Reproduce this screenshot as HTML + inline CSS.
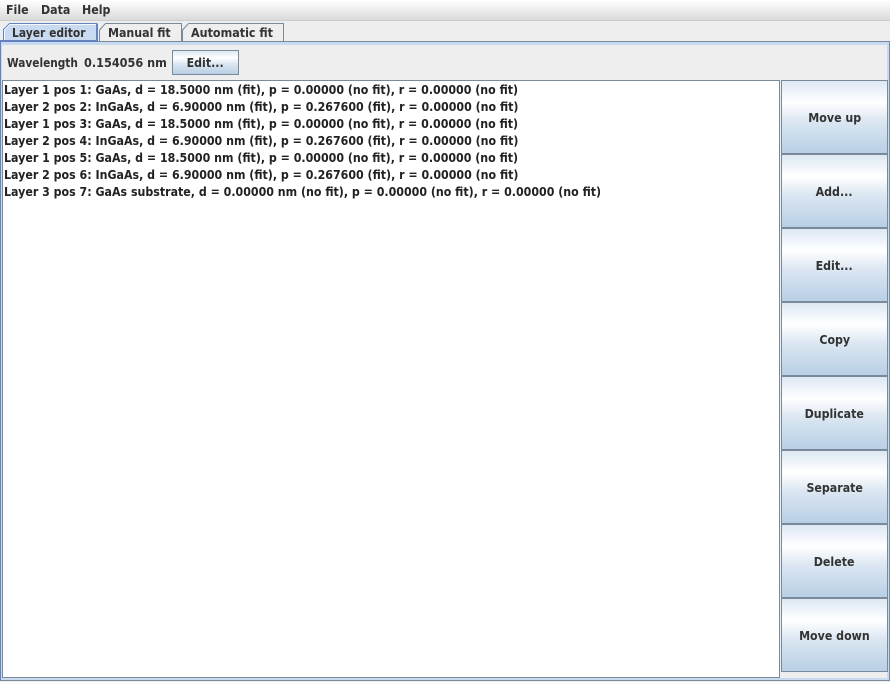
<!DOCTYPE html>
<html>
<head>
<meta charset="utf-8">
<style>
html,body{margin:0;padding:0;background:#eeeeee;}
#r{position:relative;width:890px;height:682px;overflow:hidden;background:#eeeeee;font-family:"DejaVu Sans",sans-serif;font-weight:bold;font-size:12px;color:#333333;}
#r div{position:absolute;box-sizing:border-box;}
.t{white-space:pre;line-height:14px;height:14px;transform:scaleX(.92);transform-origin:0 0;}
.grad{background:linear-gradient(to bottom,#dde8f3 0%,#ffffff 30%,#dce7f2 55%,#b8cfe5 100%);}
.b{left:781px;width:107px;height:74px;border:1px solid #7a8a99;text-align:center;line-height:74px;}
.b span,.e span{display:inline-block;transform:scaleX(.92);white-space:pre;}
.l{left:4px;color:#222222;}
</style>
</head>
<body>
<div id="r">
<div style="left:0;top:0;width:890px;height:20px;background:linear-gradient(to bottom,#ffffff,#dadada);"></div>
<div style="left:0;top:20px;width:890px;height:1px;background:#cccccc;"></div>
<div class="t" style="left:6px;top:3px;">File</div>
<div class="t" style="left:41px;top:3px;">Data</div>
<div class="t" style="left:82px;top:3px;">Help</div>

<div style="left:0;top:41px;width:890px;height:640px;border:1px solid #7a8a99;border-left:1px solid #6382bf;background:#c8daf0;"></div>
<div style="left:2px;top:45px;width:885px;height:633px;background:#eeeeee;"></div>

<svg style="position:absolute;left:0;top:0;" width="300" height="46" shape-rendering="crispEdges">
<path d="M99.5 41V30L105.5 23.5H181.5V41" fill="#eeeeee" stroke="#7a8a99" shape-rendering="auto"/>
<path d="M182.5 41V30L188.5 23.5H283.5V41" fill="#eeeeee" stroke="#7a8a99" shape-rendering="auto"/>
<rect x="1" y="42" width="300" height="3" fill="#c8daf0"/>
<path d="M3.5 41V29.5L9.5 23.5H97V41Z" fill="#c8daf0" stroke="#6382bf" shape-rendering="auto"/>
<path d="M4.5 41V30L10 24.5H96" fill="none" stroke="#ffffff" stroke-opacity=".8" shape-rendering="auto"/>
<rect x="96" y="24" width="2" height="18" fill="#6382bf"/>
<rect x="0" y="40" width="98" height="2" fill="#6382bf"/>
<rect x="4" y="40" width="93" height="1" fill="#6382bf"/>
<rect x="98" y="41" width="192" height="1" fill="#7a8a99"/>
<rect x="0" y="42" width="1" height="4" fill="#6382bf"/>
</svg>

<div class="t" style="left:12px;top:26px;transform:scaleX(.895);">Layer editor</div>
<div class="t" style="left:108px;top:26px;">Manual fit</div>
<div class="t" style="left:191px;top:26px;transform:scaleX(.93);">Automatic fit</div>

<div class="t" style="left:7px;top:56px;transform:scaleX(.88);">Wavelength</div>
<div class="t" style="left:84px;top:56px;transform:scaleX(.94);">0.154056 nm</div>
<div class="grad e" style="left:172px;top:50px;width:67px;height:25px;border:1px solid #7a8a99;text-align:center;line-height:24px;"><span>Edit...</span></div>

<div style="left:2px;top:80px;width:778px;height:598px;background:#ffffff;border:1px solid #7a8a99;"></div>
<div class="t l" style="top:83px;">Layer 1 pos 1: GaAs, d = 18.5000 nm (fit), p = 0.00000 (no fit), r = 0.00000 (no fit)</div>
<div class="t l" style="top:100px;">Layer 2 pos 2: InGaAs, d = 6.90000 nm (fit), p = 0.267600 (fit), r = 0.00000 (no fit)</div>
<div class="t l" style="top:117px;">Layer 1 pos 3: GaAs, d = 18.5000 nm (fit), p = 0.00000 (no fit), r = 0.00000 (no fit)</div>
<div class="t l" style="top:134px;">Layer 2 pos 4: InGaAs, d = 6.90000 nm (fit), p = 0.267600 (fit), r = 0.00000 (no fit)</div>
<div class="t l" style="top:151px;">Layer 1 pos 5: GaAs, d = 18.5000 nm (fit), p = 0.00000 (no fit), r = 0.00000 (no fit)</div>
<div class="t l" style="top:168px;">Layer 2 pos 6: InGaAs, d = 6.90000 nm (fit), p = 0.267600 (fit), r = 0.00000 (no fit)</div>
<div class="t l" style="top:185px;">Layer 3 pos 7: GaAs substrate, d = 0.00000 nm (no fit), p = 0.00000 (no fit), r = 0.00000 (no fit)</div>

<div class="b grad" style="top:80px;"><span>Move up</span></div>
<div class="b grad" style="top:154px;"><span>Add...</span></div>
<div class="b grad" style="top:228px;"><span>Edit...</span></div>
<div class="b grad" style="top:302px;"><span>Copy</span></div>
<div class="b grad" style="top:376px;"><span>Duplicate</span></div>
<div class="b grad" style="top:450px;"><span>Separate</span></div>
<div class="b grad" style="top:524px;"><span>Delete</span></div>
<div class="b grad" style="top:598px;"><span>Move down</span></div>
</div>
</body>
</html>
